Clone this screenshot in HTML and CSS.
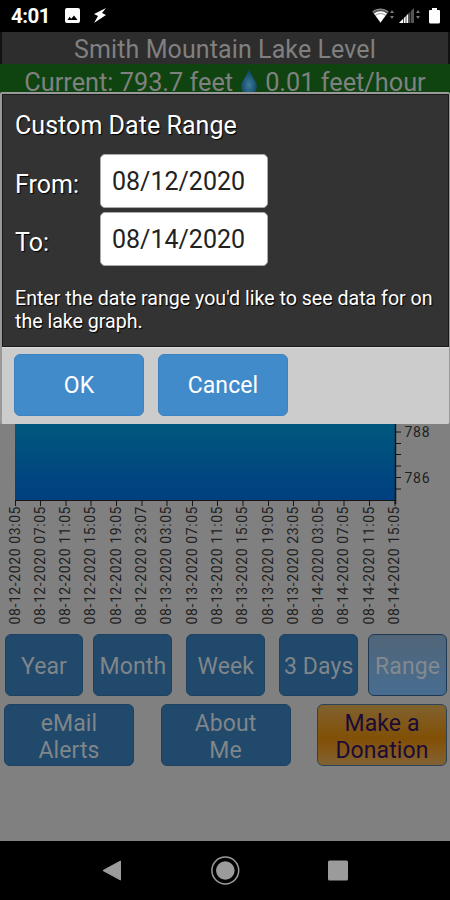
FILE: index.html
```html
<!DOCTYPE html>
<html lang="en">
<head>
<meta charset="utf-8">
<title>Smith Mountain Lake Level</title>
<link rel="stylesheet" href="styles.css">
</head>
<body>
<div class="phone">
  <header class="status">
    <span class="clock">4:01</span>
    <svg class="status-left" width="44" height="18" viewBox="0 0 44 18">
      <path fill="#fff" fill-rule="evenodd" d="M2 1h11q2 0 2 2v11q0 2-2 2H2q-2 0-2-2V3q0-2 2-2zM2.500 13h10L9 8.500l-2.700 3.200L4.600 9.800z"/>
      <path fill="#fff" d="M41 1L29 7l4 2-4 7 12-8-4-2z"/>
    </svg>
    <svg class="status-right" width="72" height="18" viewBox="0 0 72 18">
      <path fill="#555" d="M0 4.500Q8.500-1 17 4.500L8.500 16z"/>
      <path d="M1 4.500Q8.500-.5 16 4.500" fill="none" stroke="#999"/>
      <path fill="#fff" d="M2 6.500Q8.500 2 15 6.500L8.500 15.500z"/>
      <path d="M3 8.500q5.500-4 11 0" fill="none" stroke="#777" stroke-width=".8"/>
      <path fill="#777" d="M18 6l2-3 2 3zM18 9l2 3 2-3zM44 6l2-3 2 3zM44 9l2 3 2-3z"/>
      <path fill="#555" d="M27 16L42 1v15z"/>
      <path fill="#fff" d="M27 16l9-9v9z"/>
      <path stroke="#000" stroke-width=".7" d="M31.500 10v6M34 8v8M38.500 3v13"/>
      <path fill="#fff" d="M60 1h5v2h2q1 0 1 1v11q0 1.500-1.500 1.500h-8Q57 16.500 57 15V4q0-1 1-1h2z"/>
    </svg>
  </header>
  <main class="app">
    <h1 class="title"><span>Smith Mountain Lake Level</span></h1>
    <div class="current">
      <span>Current: 793.7 feet</span>
      <svg width="18" height="26" viewBox="0 0 18 26">
        <defs><radialGradient id="drop" cx=".5" cy=".65" r=".55"><stop offset="0" stop-color="#417a98"/><stop offset="1" stop-color="#0b4565"/></radialGradient></defs>
        <path fill="url(#drop)" d="M9 0C8 7 1 13 1 19a8 7 0 0 0 16 0C17 13 10 7 9 0z"/>
      </svg>
      <span>0.01 feet/hour</span>
    </div>
    <svg class="chart" width="450" height="534" viewBox="0 95 450 534">
      <defs><linearGradient id="water" x1="0" y1="424" x2="0" y2="500" gradientUnits="userSpaceOnUse"><stop offset="0" stop-color="#00587d"/><stop offset="1" stop-color="#003f80"/></linearGradient></defs>
      <path fill="url(#water)" d="M15 120h380v380H15z"/>
      <path fill="none" stroke="#151515" d="M15 500.500h381"/>
      <path fill="none" stroke="#151515" stroke-width="1.500" d="M395.500 120v384"/>
      <path fill="none" stroke="#151515" d="M396 432h5M396 443.500h5M396 454.500h5M396 466h5M396 477.500h5M396 489h5"/>
      <path fill="none" stroke="#151515" d="M15.500 500v6M40.500 500v6M66 500v6M91 500v6M116.500 500v6M142 500v6M167 500v6M192.500 500v6M217.500 500v6M243 500v6M268.500 500v6M293.500 500v6M319 500v6M344 500v6M369.500 500v6M395 500v6"/>
      <g class="tick">
        <text x="404.500" y="437" textLength="25">788</text>
        <text x="404.500" y="482.500" textLength="25">786</text>
        <text transform="translate(19.500 624.500) rotate(-90)" textLength="118">08-12-2020 03:05</text>
        <text transform="translate(44.800 624.500) rotate(-90)" textLength="118">08-12-2020 07:05</text>
        <text transform="translate(70.100 624.500) rotate(-90)" textLength="118">08-12-2020 11:05</text>
        <text transform="translate(95.400 624.500) rotate(-90)" textLength="118">08-12-2020 15:05</text>
        <text transform="translate(120.700 624.500) rotate(-90)" textLength="118">08-12-2020 19:05</text>
        <text transform="translate(146 624.500) rotate(-90)" textLength="118">08-12-2020 23:07</text>
        <text transform="translate(171.300 624.500) rotate(-90)" textLength="118">08-13-2020 03:05</text>
        <text transform="translate(196.600 624.500) rotate(-90)" textLength="118">08-13-2020 07:05</text>
        <text transform="translate(221.900 624.500) rotate(-90)" textLength="118">08-13-2020 11:05</text>
        <text transform="translate(247.200 624.500) rotate(-90)" textLength="118">08-13-2020 15:05</text>
        <text transform="translate(272.500 624.500) rotate(-90)" textLength="118">08-13-2020 19:05</text>
        <text transform="translate(297.800 624.500) rotate(-90)" textLength="118">08-13-2020 23:05</text>
        <text transform="translate(323.100 624.500) rotate(-90)" textLength="118">08-14-2020 03:05</text>
        <text transform="translate(348.400 624.500) rotate(-90)" textLength="118">08-14-2020 07:05</text>
        <text transform="translate(373.700 624.500) rotate(-90)" textLength="118">08-14-2020 11:05</text>
        <text transform="translate(399 624.500) rotate(-90)" textLength="118">08-14-2020 15:05</text>
      </g>
    </svg>
    <div class="ranges">
      <button class="btn">Year</button><button class="btn">Month</button><button class="btn">Week</button><button class="btn">3 Days</button><button class="btn selected">Range</button>
    </div>
    <div class="actions">
      <button class="btn">eMail<br>Alerts</button><button class="btn">About<br>Me</button><button class="btn donate">Make a<br>Donation</button>
    </div>
  </main>
  <nav class="navbar">
    <svg width="450" height="59" viewBox="0 841 450 59">
      <path fill="#9b9b9b" stroke="#9b9b9b" stroke-linejoin="round" d="M103 870.500l17.500-9.500v19z"/>
      <circle cx="225.300" cy="870.500" r="13.400" fill="none" stroke="#9b9b9b" stroke-width="1.500"/>
      <circle cx="225.300" cy="870.500" r="9.300" fill="#9b9b9b"/>
      <rect x="328" y="860.500" width="20" height="20" rx="1.500" fill="#9b9b9b"/>
    </svg>
  </nav>
  <section class="dialog">
    <div class="dialog-body">
      <h2>Custom Date Range</h2>
      <div class="field"><label for="from">From:</label><input id="from" value="08/12/2020"></div>
      <div class="field"><label for="to">To:</label><input id="to" value="08/14/2020"></div>
      <p>Enter the date range you'd like to see data for on<br>the lake graph.</p>
    </div>
    <div class="dialog-actions"><button class="btn">OK</button><button class="btn">Cancel</button></div>
  </section>
</div>
</body>
</html>
```

FILE: styles.css
```css
* { box-sizing: border-box; }
body { margin: 0; background: #000; font-family: Roboto, sans-serif; }
h1, h2, p { margin: 0; font-weight: 400; }
button, input { font: inherit; margin: 0; }
.phone { position: relative; width: 450px; height: 900px; overflow: hidden; display: flex; flex-direction: column; background: #000; }
.status { height: 32px; display: flex; align-items: center; padding: 0 6px 0 11px; flex: none; }
.clock { width: 54px; color: #fff; font-size: 20.5px; font-weight: 700; line-height: 32px; letter-spacing: -.5px; }
.status-left { flex: none; }
.status-right { margin-left: auto; }
.app { height: 809px; background: #808080; flex: none; }
.title { height: 32px; background: #2d2d2d; border: solid #111; border-width: 0 2px; text-align: center; color: #808080; font-size: 25px; line-height: 35px; letter-spacing: .1px; white-space: nowrap; }
.current { height: 31px; background: #0f430f; color: #808080; font-size: 25.3px; line-height: 38px; display: flex; justify-content: center; gap: 7px; overflow: hidden; white-space: nowrap; }
.current svg { margin-top: 4px; flex: none; }
.chart { display: block; }
.tick { font-size: 14px; fill: #202020; }
.btn { display: flex; align-items: center; justify-content: center; text-align: center; padding: 0; border: 1px solid #1d4260; border-radius: 6px; background: #21496b; color: #808589; font-size: 23px; line-height: 27px; letter-spacing: .1px; white-space: nowrap; }
.ranges { display: grid; grid-template-columns: repeat(5, 79px); column-gap: 10px; height: 62px; margin: 5px 3px 8px 4.5px; }
.ranges { display: flex; gap: 10px; }
.ranges .btn { width: 79px; padding-top: 2px; }
.ranges .btn:nth-child(3), .ranges .btn:nth-child(4) { margin-left: 4px; }
.ranges .selected { background: linear-gradient(#516578, #486d91); border-color: #1e3854; color: #838a90; }
.actions { display: flex; justify-content: space-between; height: 62px; margin: 0 3px 0 4px; }
.actions .btn { width: 130px; padding-top: 3px; }
.actions .donate { background: linear-gradient(#80622f, #815006 55%, #845717 75%, #806334); border-color: #2b4354; color: #1b0b38; }
.navbar { height: 59px; }
.navbar svg { display: block; }
.dialog { position: absolute; left: 0; top: 92px; width: 450px; height: 332px; border: solid #999; border-width: 2px 1px 0 2px; border-radius: 2px; background: #ccc; }
.dialog-body { height: 253px; background: #333; border: 1px solid #191919; color: #fff; font-size: 25px; padding: 12px 11px 0 12px; text-shadow: 1px 1px 1px #000; }
.dialog h2 { font-size: 25px; line-height: 37px; height: 47px; letter-spacing: .05px; white-space: nowrap; }
.field { display: flex; height: 58px; }
.field label { width: 85px; line-height: 62px; }
.field input { width: 168px; height: 54px; background: #fff; border: 1px solid #aaa; border-radius: 5px; padding: 1px 11px 0; color: #222; font-size: 25px; }
.dialog p { font-size: 19.6px; line-height: 23px; margin-top: 17px; white-space: nowrap; }
.dialog-actions { height: 77px; display: flex; gap: 14px; padding: 6px 12px; border-top: 1px solid #ddd; }
.dialog .btn { width: 130px; height: 62px; background: #428bca; border-color: #3c83c2; color: #fff; padding-top: 1px; }
```
